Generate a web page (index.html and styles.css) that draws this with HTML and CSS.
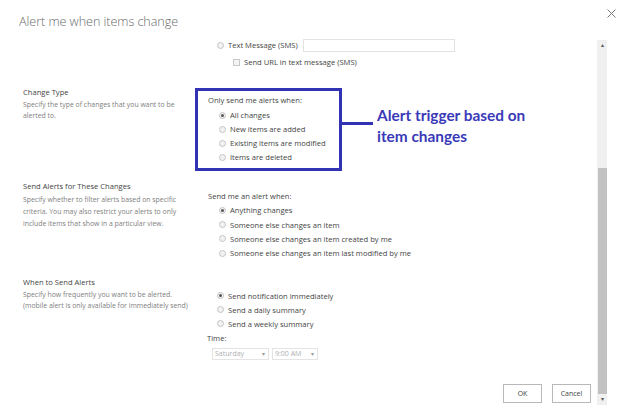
FILE: index.html
```html
<!DOCTYPE html>
<html>
<head>
<meta charset="utf-8">
<link rel="stylesheet" href="styles.css">
</head>
<body>
<div class="page">
  <div class="header">
    <div class="title">Alert me when items change</div>
    <svg class="close" width="9" height="9" viewBox="0 0 9 9"><path d="M0.5 0.5 L8.5 8.5 M8.5 0.5 L0.5 8.5" stroke="#777" stroke-width="1" fill="none"/></svg>
  </div>
  <div class="main">
    <div class="content">
      <div class="section sec-delivery">
        <div class="left"></div>
        <div class="right">
          <div class="row sms-row"><span class="radio"></span><span class="lbl">Text Message (SMS)</span><span class="textbox"></span></div>
          <div class="row url-row"><span class="check"></span><span class="lbl">Send URL in text message (SMS)</span></div>
        </div>
      </div>

      <div class="section sec-type">
        <div class="left">
          <div class="sec-title">Change Type</div>
          <div class="sec-desc">Specify the type of changes that you want to be<br>alerted to.</div>
        </div>
        <div class="right">
          <div class="hl-box">
            <div class="group-head">Only send me alerts when:</div>
            <div class="options">
              <div class="row opt"><span class="radio on"></span><span class="lbl">All changes</span></div>
              <div class="row opt"><span class="radio"></span><span class="lbl">New items are added</span></div>
              <div class="row opt"><span class="radio"></span><span class="lbl">Existing items are modified</span></div>
              <div class="row opt"><span class="radio"></span><span class="lbl">Items are deleted</span></div>
            </div>
          </div>
        </div>
      </div>

      <div class="section sec-send">
        <div class="left">
          <div class="sec-title">Send Alerts for These Changes</div>
          <div class="sec-desc desc12">Specify whether to filter alerts based on specific<br>criteria. You may also restrict your alerts to only<br>include items that show in a particular view.</div>
        </div>
        <div class="right">
          <div class="group-head send-head">Send me an alert when:</div>
          <div class="options send-opts">
            <div class="row opt"><span class="radio on"></span><span class="lbl">Anything changes</span></div>
            <div class="row opt"><span class="radio"></span><span class="lbl">Someone else changes an item</span></div>
            <div class="row opt"><span class="radio"></span><span class="lbl">Someone else changes an item created by me</span></div>
            <div class="row opt"><span class="radio"></span><span class="lbl">Someone else changes an item last modified by me</span></div>
          </div>
        </div>
      </div>

      <div class="section sec-when">
        <div class="left">
          <div class="sec-title">When to Send Alerts</div>
          <div class="sec-desc">Specify how frequently you want to be alerted.<br>(mobile alert is only available for immediately send)</div>
        </div>
        <div class="right">
          <div class="options when-opts">
            <div class="row opt2"><span class="radio on"></span><span class="lbl">Send notification immediately</span></div>
            <div class="row opt2"><span class="radio"></span><span class="lbl">Send a daily summary</span></div>
            <div class="row opt2"><span class="radio"></span><span class="lbl">Send a weekly summary</span></div>
          </div>
          <div class="time-lbl">Time:</div>
          <div class="selects">
            <div class="sel sel-day"><span>Saturday</span><span class="arr">&#9662;</span></div>
            <div class="sel sel-hour"><span>9:00 AM</span><span class="arr">&#9662;</span></div>
          </div>
        </div>
      </div>

      <div class="buttons">
        <div class="btn">OK</div>
        <div class="btn">Cancel</div>
      </div>
    </div>
    <div class="scrollbar">
      <div class="sb-arrow">&#9652;</div>
      <div class="sb-space"></div>
      <div class="sb-thumb"></div>
      <div class="sb-arrow">&#9662;</div>
    </div>
  </div>

  <div class="connector"></div>
  <div class="annotation">Alert trigger based on<br>item changes</div>
</div>
</body>
</html>
```

FILE: styles.css
```css
html, body {
  margin: 0;
  padding: 0;
  background: #ffffff;
}
body {
  font-family: "Open Sans", "Noto Sans", sans-serif;
  color: #444;
}
.page {
  position: relative;
  width: 624px;
  height: 413px;
  overflow: hidden;
}
.header {
  height: 38px;
  display: flex;
  align-items: flex-start;
  justify-content: space-between;
}
.title {
  margin: 12px 0 0 19px;
  font-size: 12.6px;
  font-weight: 300;
  line-height: 20px;
  color: #6a6a6a;
  letter-spacing: -0.05px;
}
.close {
  margin: 9px 8px 0 0;
}
.main {
  display: flex;
  height: 375px;
}
.content {
  flex: 1;
  display: flex;
  flex-direction: column;
}
.section {
  display: grid;
  grid-template-columns: 185px 1fr;
}
.left {
  padding-left: 23px;
}
.sec-title {
  font-size: 7.6px;
  line-height: 12px;
  color: #444;
}
.sec-desc {
  margin-top: 1px;
  font-size: 6.9px;
  line-height: 11px;
  color: #808080;
  white-space: nowrap;
}
.desc12 {
  line-height: 12px;
  margin-top: 2px;
}
.row {
  display: flex;
  align-items: center;
  height: 14px;
  font-size: 7.6px;
  color: #444;
  white-space: nowrap;
}
.radio {
  width: 5px;
  height: 5px;
  border: 1px solid #c4c4c4;
  border-radius: 50%;
  background: #f2f2f2;
  flex: none;
  position: relative;
}
.radio.on::after {
  content: "";
  position: absolute;
  left: 1px;
  top: 1px;
  width: 3px;
  height: 3px;
  border-radius: 50%;
  background: #555;
}
.check {
  width: 5px;
  height: 5px;
  border: 1px solid #c8c8c8;
  background: #f4f4f4;
  flex: none;
}
.lbl {
  margin-left: 4px;
}

/* delivery (partially scrolled) */
.sec-delivery .right {
  padding-left: 32px;
}
.textbox {
  margin-left: 5px;
  width: 150px;
  height: 11px;
  border: 1px solid #e3e3e3;
  background: #fff;
}
.url-row {
  margin-top: 3px;
  padding-left: 16px;
}

/* change type */
.sec-type {
  margin-top: 17px;
}
.hl-box {
  margin: 2px 0 0 10px;
  width: 131px;
  border: 3px solid #3232b4;
  padding: 3px 0 4px 10px;
}
.group-head {
  font-size: 7.6px;
  line-height: 12px;
  color: #444;
}
.options {
  margin-top: 2px;
  padding-left: 11px;
}

/* send */
.sec-send {
  margin-top: 9px;
}
.send-head {
  margin-top: 10px;
  padding-left: 23px;
}
.send-opts {
  margin-top: 1px;
  padding-left: 34px;
}
.send-opts .row {
  height: 14.4px;
}

/* when */
.sec-when {
  margin-top: 15px;
}
.when-opts {
  margin-top: 13px;
  padding-left: 32px;
}
.time-lbl {
  margin-top: 1px;
  padding-left: 22px;
  font-size: 7.6px;
  line-height: 12px;
  color: #444;
}
.selects {
  display: flex;
  gap: 3px;
  margin-top: 4px;
  padding-left: 27px;
}
.sel {
  display: flex;
  justify-content: space-between;
  align-items: center;
  height: 10px;
  border: 1px solid #e4e4e4;
  font-size: 7px;
  color: #b0b0b0;
  padding: 0 3px 0 2px;
}
.sel-day {
  width: 50px;
}
.sel-hour {
  width: 39px;
}
.arr {
  font-size: 6px;
  color: #999;
}

/* buttons */
.buttons {
  display: flex;
  justify-content: flex-end;
  gap: 10px;
  margin-top: 24px;
  padding-right: 6px;
}
.btn {
  width: 37px;
  height: 17px;
  border: 1px solid #b8b8b8;
  font-size: 7px;
  line-height: 17px;
  text-align: center;
  color: #444;
  background: #fff;
}

/* scrollbar */
.scrollbar {
  width: 10px;
  margin: 2px 17px 0 0;
  height: 365px;
  background: #f0f0f0;
  display: flex;
  flex-direction: column;
  align-items: center;
}
.sb-arrow {
  height: 10px;
  font-size: 6px;
  line-height: 10px;
  color: #555;
}
.sb-space {
  height: 118px;
}
.sb-thumb {
  width: 9px;
  height: 226px;
  background: #c2c2c2;
}

/* annotation overlay */
.connector {
  position: absolute;
  left: 342px;
  top: 122px;
  width: 31px;
  height: 3px;
  background: #3232b4;
}
.annotation {
  position: absolute;
  left: 377px;
  top: 105px;
  font-family: Lato, "Open Sans", sans-serif;
  font-weight: bold;
  font-size: 15.4px;
  line-height: 21px;
  color: #3a3ab8;
}
```
